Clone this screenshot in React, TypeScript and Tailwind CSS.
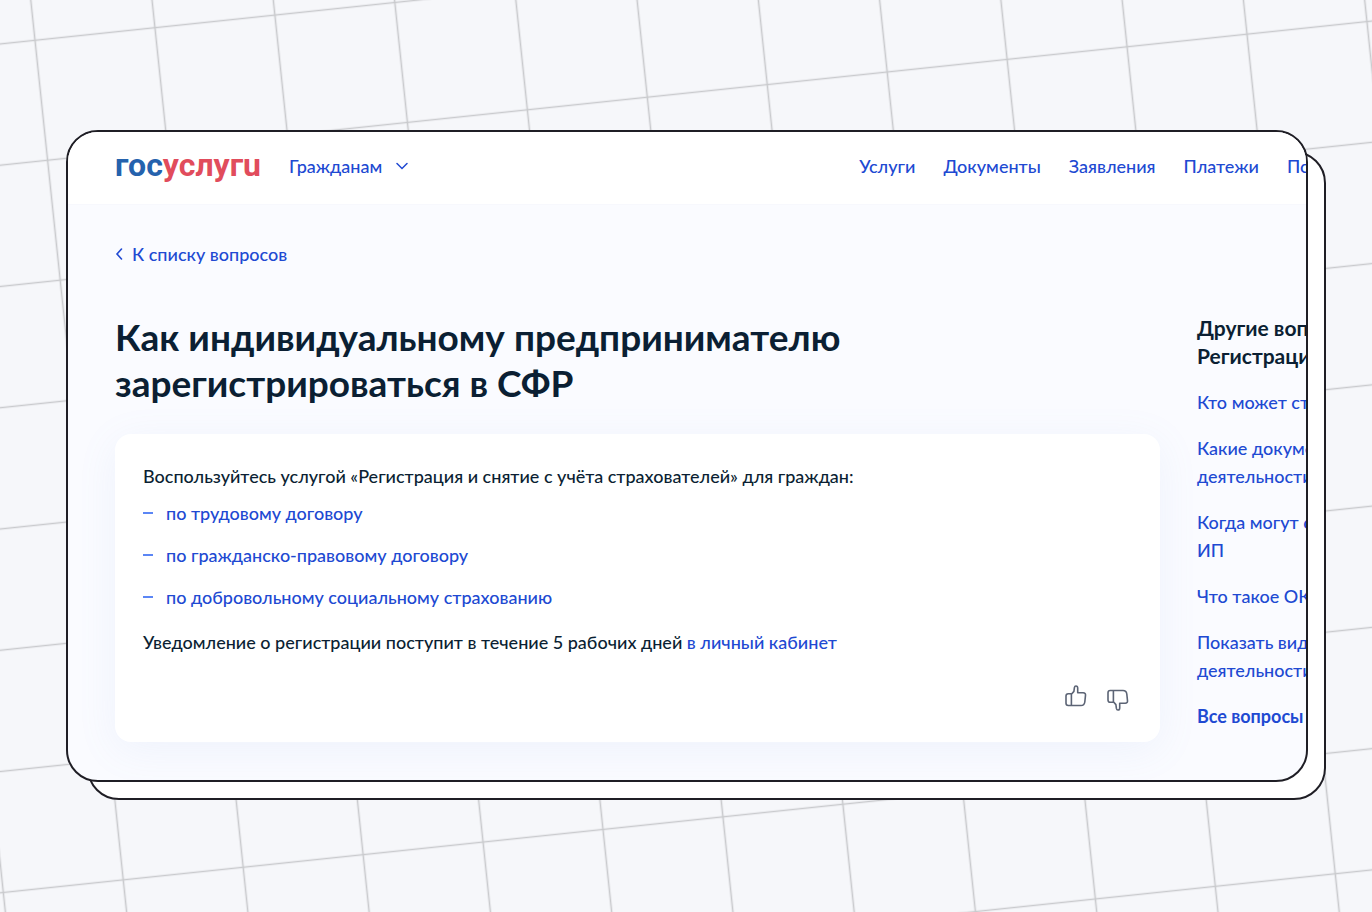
import React from "react";

const navItems = ["Услуги", "Документы", "Заявления", "Платежи", "Помощь"];

const services = [
  "по трудовому договору",
  "по гражданско-правовому договору",
  "по добровольному социальному страхованию",
];

const questions = [
  ["Кто может стать ИП"],
  ["Какие документы нужны", "деятельности"],
  ["Когда могут отказать", "ИП"],
  ["Что такое ОКВЭД"],
  ["Показать виды", "деятельности"],
];

function GridBackground() {
  return (
    <svg className="absolute inset-0 h-full w-full" aria-hidden="true">
      <defs>
        <pattern
          id="grid"
          width="120.6"
          height="120.6"
          patternUnits="userSpaceOnUse"
          patternTransform="translate(35 40.3) rotate(-6) translate(-60.3 -60.3)"
        >
          <path d="M0 60.3H120.6M60.3 0V120.6" stroke="#c9cacd" strokeWidth="1.6" fill="none" />
        </pattern>
      </defs>
      <rect width="100%" height="100%" fill="url(#grid)" />
    </svg>
  );
}

function ThumbUp() {
  return (
    <svg width="22" height="22" viewBox="0 0 22 22" fill="none" stroke="#5c6475" strokeWidth="1.6" strokeLinejoin="round" aria-hidden="true">
      <path d="M6.400 9.200 8.900 6.400 9.400 2.600C9.600 1.500 10.100 1 10.900 1c1.200 0 1.800.8 1.800 2.100v4.700h5.500c1.700 0 2.500 1 2.300 2.600l-.7 6.600c-.3 2.200-1.700 3.500-3.800 3.500H3.200c-1.500 0-2.200-.7-2.200-2.200v-7.200c0-1.500.7-2.300 2.200-2.300h3.200v11.700" />
    </svg>
  );
}

export default function App() {
  return (
    <div className="relative flex min-h-screen items-center overflow-hidden bg-[#f6f7fa] py-10 pr-16 pl-[66px] font-['Lato','Noto_Sans',sans-serif] text-[18px] leading-7 font-medium text-[#0b1f33]">
      <GridBackground />
      <div className="relative min-w-0 flex-1">
        <div className="absolute top-[21px] -right-[18px] -bottom-[18px] left-[21px] rounded-[32px] border-2 border-[#1f1e25] bg-white" />
        <div className="relative overflow-hidden rounded-[32px] border-2 border-[#1f1e25] bg-[#fafbff]">
          <header className="flex h-[73px] items-center justify-between border-b border-[#f7f8fd] bg-white pb-1 pl-[47px] whitespace-nowrap">
            <div className="flex items-center gap-7">
              <a href="#" className="pb-[2px] font-['Roboto',sans-serif] text-[32px] leading-8 font-bold text-[#e14c5c]">
                <span className="text-[#2562ad]">гос</span>услугu
              </a>
              <button type="button" className="flex items-center gap-[14px] text-[#2049d2]">
                Гражданам
                <svg width="12" height="8" viewBox="0 0 12 8" fill="none" stroke="currentColor" strokeWidth="1.5" strokeLinecap="round" aria-hidden="true">
                  <path d="m1 1.500 5 5 5-5" />
                </svg>
              </button>
            </div>
            <nav className="flex gap-7 text-[#2049d2]">
              {navItems.map((item) => (
                <a key={item} href="#" className="last:w-[19px]">
                  {item}
                </a>
              ))}
            </nav>
          </header>

          <div className="pt-[34px] pb-[38px] pl-[47px]">
            <a href="#" className="inline-flex items-center gap-2 text-[#2049d2]">
              <svg width="9" height="12" viewBox="0 0 9 12" fill="none" stroke="currentColor" strokeWidth="1.600" strokeLinecap="round" aria-hidden="true">
                <path d="M6.500 1 2 6l4.500 5" />
              </svg>
              К списку вопросов
            </a>

            <div className="mt-[46px] flex gap-[37px]">
              <main className="min-w-0 flex-1">
                <h1 className="max-w-[800px] text-[37px] leading-[46px] font-bold">
                  Как индивидуальному предпринимателю зарегистрироваться в СФР
                </h1>
                <section className="mt-7 rounded-2xl bg-white px-7 pt-7 pb-[31px] shadow-[0_8px_40px_rgba(120,150,220,0.09)]">
                  <p>Воспользуйтесь услугой «Регистрация и снятие с учёта страхователей» для граждан:</p>
                  <ul className="mt-[9px] flex flex-col gap-[14px]">
                    {services.map((service) => (
                      <li key={service} className="flex items-center gap-[13px] text-[#2049d2]">
                        <span className="h-[2px] w-[10px] bg-[#5b86f5]" />
                        <a href="#">{service}</a>
                      </li>
                    ))}
                  </ul>
                  <p className="mt-[17px]">
                    Уведомление о регистрации поступит в течение 5 рабочих дней{" "}
                    <a href="#" className="text-[#2049d2]">в личный кабинет</a>
                  </p>
                  <div className="mt-[29px] mr-[3px] flex items-start justify-end gap-5">
                    <button type="button" aria-label="Полезно">
                      <ThumbUp />
                    </button>
                    <button type="button" aria-label="Бесполезно" className="-scale-y-100 pb-1">
                      <ThumbUp />
                    </button>
                  </div>
                </section>
              </main>

              <aside className="w-[109px] whitespace-nowrap text-[#2049d2]">
                <h2 className="text-[21px] leading-7 font-bold text-[#0b1f33]">
                  Другие вопросы
                  <br />
                  Регистрация ИП
                </h2>
                <ul className="mt-[18px] flex flex-col gap-[18px]">
                  {questions.map((lines) => (
                    <li key={lines[0]}>
                      <a href="#" className="block">
                        {lines.map((line) => (
                          <span key={line} className="block">{line}</span>
                        ))}
                      </a>
                    </li>
                  ))}
                  <li>
                    <a href="#" className="font-bold">Все вопросы</a>
                  </li>
                </ul>
              </aside>
            </div>
          </div>
        </div>
      </div>
    </div>
  );
}
